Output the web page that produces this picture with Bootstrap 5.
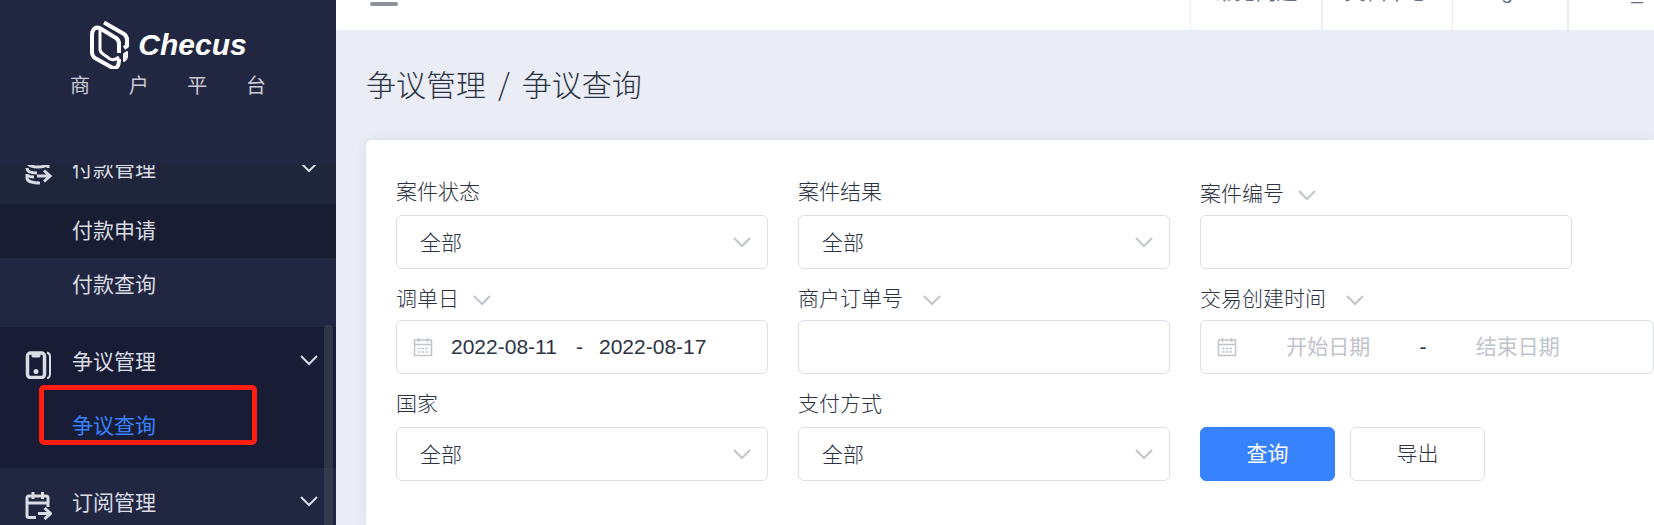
<!DOCTYPE html>
<html lang="zh-CN">
<head>
<meta charset="utf-8">
<meta name="viewport" content="width=device-width, initial-scale=1">
<title>争议查询 - Checus 商户平台</title>
<link rel="stylesheet" href="https://cdn.jsdelivr.net/npm/bootstrap@5.3.0/dist/css/bootstrap.min.css">
<style>
  :root {
    --navy: #222741;
    --navy-deep: #181d35;
    --ink: #2b3343;
    --line: #dcdfe9;
    --muted: #c0c4cc;
    --page: #eaedf5;
    --accent: #3782ff;
  }
  body {
    font-family: "Liberation Sans", "Noto Sans CJK SC", sans-serif;
    font-size: 21px;
    font-weight: 300;
    line-height: 30px;
    color: var(--ink);
    background: var(--page);
  }
  svg { fill: none; stroke: currentColor; display: block; flex: none; }

  /* Sidebar */
  .side { width: 336px; background: var(--navy); color: #d9dce4; font-weight: 400; }
  .brand-box { height: 165px; padding: 21px 70px 0; background: var(--navy); }
  .brand-mark { color: #fff; }
  .brand-name { font-size: 30px; line-height: 48px; font-weight: 700; font-style: italic; color: #fff; }
  .brand-sub { font-size: 20px; line-height: 34px; color: #c9cad3; }
  .menu-scroll { min-height: 0; }
  .menu-scroll > ul { margin-top: -31px; }
  .menu-head { height: 70px; padding: 0 18px 0 24px; gap: 20px; }
  .menu-head svg { margin-bottom: 3px; }
  .menu-head svg.mark-icon { margin: 6px 0 0; }
  .menu-head.hovered { background: #1f253a; }
  .menu-group { padding-bottom: 15px; }
  .menu-group.open { background: var(--navy-deep); }
  .menu-group.open > ul { padding-top: 2px; }
  .menu-item { height: 54px; padding-left: 72px; }
  .menu-item.hovered { background: #181d31; }
  .menu-item.current { color: var(--accent); }
  .marker { position: absolute; left: 39px; top: -14px; width: 218px; height: 60px; border: 5px solid #ff1e10; border-radius: 5px; pointer-events: none; }
  .thumb { position: absolute; right: 3px; top: 160px; bottom: 0; width: 9px; border-radius: 5px 5px 0 0; background: rgba(70, 80, 96, .5); }

  /* Top bar */
  .topbar { height: 76px; margin-top: -46px; background: #fff; color: #66708a; }
  .burger { margin-left: 34px; width: 28px; height: 4px; border-radius: 2px; background: #8e9199; align-self: flex-end; margin-bottom: 24px; box-shadow: 0 -9px #8e9199, 0 -18px #8e9199; }
  .top-link { color: inherit; border-left: 1px solid var(--page); font-weight: 400; padding: 0 23px; }
  .top-link.wide-rule { border-left-width: 2px; padding-left: 22px; }
  .top-link.user { padding: 0 11px 0 28px; }

  /* Page */
  .crumbs { font-family: "Noto Sans CJK SC", sans-serif; font-size: 30px; line-height: 40px; padding: 33px 30px 37px; gap: 12px; }
  .panel { margin-left: 30px; border-radius: 6px 0 0 0; background: #fff; padding: 37px 0 45px 30px; box-shadow: 0 0 12px rgba(60, 80, 140, .1); }
  .filters { display: grid; grid-template-columns: minmax(0, 372fr) minmax(0, 372fr) minmax(0, 454fr); gap: 15px 30px; align-items: end; }
  .cap { display: flex; align-items: center; gap: 14px; margin-bottom: 8px; line-height: 30px; }
  .cap.tight { margin-bottom: 6px; }
  .cap.wide { gap: 20px; }
  .cap svg { margin-top: 3px; color: var(--muted); }
  .box { height: 54px; border: 1px solid var(--line); border-radius: 6px; color: var(--ink); background: #fff; }
  select.box, input.box { display: block; width: 100%; padding: 1px 23px 0; appearance: none; font-weight: 300; }
  .arrow { position: absolute; right: 17px; top: 22px; color: var(--muted); pointer-events: none; }
  .limit { max-width: 372px; }
  .range { display: flex; align-items: center; padding-left: 16px; }
  .range.wide { padding-right: 44px; }
  .range input { border: 0; background: none; padding: 0; color: var(--ink); min-width: 0; outline: 0; }
  .range input::placeholder { color: var(--muted); opacity: 1; }
  .range svg { color: var(--muted); }
  .range .day { width: 109px; }
  .range .first { margin-left: 18px; }
  .range .open-day { flex: 1; text-align: center; }
  .act { width: 135px; height: 54px; border-radius: 6px; font-size: 21px; padding: 0; }
  .acts { gap: 15px; }
  .act.go { background: var(--accent); color: #fff; border-color: var(--accent); font-weight: 400; }
  .act.out { background: #fff; color: var(--ink); border-color: var(--line); font-weight: 300; }
</style>
</head>
<body>
<svg width="0" height="0" class="position-absolute" aria-hidden="true">
  <symbol id="chev" viewBox="0 0 18 11"><path d="M1 1l8 8 8-8"/></symbol>
  <symbol id="cal" viewBox="0 0 20 20"><path d="M1.500 3h17v15.500h-17zM1.500 7.500h17" stroke-width="1.500"/><path d="M5.500 1v4M14.500 1v4" stroke-width="1.500"/><path d="M5 11.500h10M5 15h10" stroke-width="1.500" stroke-dasharray="2.500 1.200"/></symbol>
</svg>
<div class="d-flex min-vh-100">
  <aside class="side vh-100 flex-shrink-0 d-flex flex-column overflow-hidden">
    <div class="brand-box flex-shrink-0">
      <div class="d-flex align-items-center justify-content-center gap-2">
        <svg class="brand-mark" width="41" height="48" viewBox="0 0 41 48" stroke-width="4" stroke-linejoin="round">
          <path d="M30 32V23q0-4-3-6L13 8.500Q8 5 5 8q-2 2-2 6v17q0 4 3 6l16 9q4 2 6 0 2-2 2-8"/>
          <path d="M11 9v19q0 3 3 5l7 5q4 2 9-2" stroke-width="3"/>
          <path d="M15 1.500l20 11.500q3 2 3 6v6l-3 2"/>
          <path d="M38 31v4q0 3-3 5V33z" stroke-width="2" fill="#fff"/>
        </svg>
        <span class="brand-name">Checus</span>
      </div>
      <div class="brand-sub d-flex justify-content-between"><span>商</span><span>户</span><span>平</span><span>台</span></div>
    </div>
    <nav class="menu-scroll flex-grow-1 overflow-hidden position-relative">
      <ul class="list-unstyled mb-0">
        <li class="menu-group">
          <a href="#" class="menu-head hovered d-flex align-items-center text-reset text-decoration-none">
            <svg class="mark-icon" width="28" height="28" viewBox="0 0 28 28" stroke-width="3"><ellipse cx="14" cy="5" rx="10" ry="4"/><path d="M3 10c0 4 4 5 10 5M3 16v4c0 3 5 5 13 5M3 17c2 2 4 2 7 2M24 5v5"/><path d="M13 18h12M20 12.500l6 5.500-6 5.500"/></svg>
            <span class="flex-grow-1">付款管理</span>
            <svg width="18" height="11" stroke-width="2"><use href="#chev"/></svg>
          </a>
          <ul class="list-unstyled">
            <li><a href="#" class="menu-item hovered d-flex align-items-center text-reset text-decoration-none">付款申请</a></li>
            <li><a href="#" class="menu-item d-flex align-items-center text-reset text-decoration-none">付款查询</a></li>
          </ul>
        </li>
        <li class="menu-group open">
          <a href="#" class="menu-head d-flex align-items-center text-reset text-decoration-none">
            <svg class="mark-icon" width="28" height="28" viewBox="0 0 28 28"><rect x="3.500" y="2" width="17" height="24.500" rx="3" stroke-width="3.500"/><path d="M8 2h8v3q0 1-1 1H9q-1 0-1-1z" fill="currentColor"/><circle cx="12" cy="20.500" r="2.500" fill="currentColor" stroke="none"/><path d="M23 1.500q3 1 3 4v18q0 3-3 4" stroke-width="2"/></svg>
            <span class="flex-grow-1">争议管理</span>
            <svg width="18" height="11" stroke-width="2"><use href="#chev"/></svg>
          </a>
          <ul class="list-unstyled">
            <li class="position-relative"><a href="#" class="menu-item current d-flex align-items-center text-decoration-none">争议查询</a><span class="marker"></span></li>
          </ul>
        </li>
        <li class="menu-group">
          <a href="#" class="menu-head d-flex align-items-center text-reset text-decoration-none">
            <svg class="mark-icon" width="28" height="28" viewBox="0 0 28 28" stroke-width="3"><path d="M12 25.500H5q-2 0-2-2V6q0-2 2-2h17q2 0 2 2v9M3 11h21M9 0v7M18.500 0v7"/><path d="M14 21.500h12M20.500 16l6 5.500-6 5.500"/></svg>
            <span class="flex-grow-1">订阅管理</span>
            <svg width="18" height="11" stroke-width="2"><use href="#chev"/></svg>
          </a>
        </li>
      </ul>
      <div class="thumb"></div>
    </nav>
  </aside>

  <main class="flex-grow-1 overflow-hidden">
    <header class="topbar d-flex align-items-stretch">
      <button type="button" class="burger border-0 p-0" aria-label="菜单"></button>
      <nav class="ms-auto d-flex align-items-stretch text-nowrap">
        <a href="#" class="top-link d-flex align-items-center text-decoration-none">常见问题</a>
        <a href="#" class="top-link wide-rule d-flex align-items-center text-decoration-none">文档中心</a>
        <a href="#" class="top-link d-flex align-items-center text-decoration-none">English</a>
        <a href="#" class="top-link wide-rule user d-flex align-items-center text-decoration-none">test_</a>
      </nav>
    </header>

    <nav aria-label="breadcrumb">
      <ol class="crumbs list-unstyled d-flex mb-0"><li>争议管理</li><li>/</li><li>争议查询</li></ol>
    </nav>

    <section class="panel">
      <form class="filters">
        <div>
          <label class="cap" for="status">案件状态</label>
          <div class="position-relative"><select id="status" class="box"><option>全部</option></select><svg class="arrow" width="18" height="11" stroke-width="2"><use href="#chev"/></svg></div>
        </div>
        <div>
          <label class="cap" for="result">案件结果</label>
          <div class="position-relative"><select id="result" class="box"><option>全部</option></select><svg class="arrow" width="18" height="11" stroke-width="2"><use href="#chev"/></svg></div>
        </div>
        <div>
          <label class="cap tight" for="caseno">案件编号<svg width="18" height="11" stroke-width="2"><use href="#chev"/></svg></label>
          <input id="caseno" type="text" class="box limit">
        </div>

        <div>
          <label class="cap tight" for="from">调单日<svg width="18" height="11" stroke-width="2"><use href="#chev"/></svg></label>
          <div class="box range">
            <svg width="20" height="20"><use href="#cal"/></svg>
            <input id="from" type="text" class="day first" value="2022-08-11">
            <span class="px-3">-</span>
            <input type="text" class="day" value="2022-08-17" aria-label="结束日期">
          </div>
        </div>
        <div>
          <label class="cap tight wide" for="order">商户订单号<svg width="18" height="11" stroke-width="2"><use href="#chev"/></svg></label>
          <input id="order" type="text" class="box">
        </div>
        <div>
          <label class="cap tight wide" for="created">交易创建时间<svg width="18" height="11" stroke-width="2"><use href="#chev"/></svg></label>
          <div class="box range wide">
            <svg width="20" height="20"><use href="#cal"/></svg>
            <input id="created" type="text" class="open-day" placeholder="开始日期">
            <span>-</span>
            <input type="text" class="open-day" placeholder="结束日期" aria-label="结束日期">
          </div>
        </div>

        <div>
          <label class="cap" for="country">国家</label>
          <div class="position-relative"><select id="country" class="box"><option>全部</option></select><svg class="arrow" width="18" height="11" stroke-width="2"><use href="#chev"/></svg></div>
        </div>
        <div>
          <label class="cap" for="pay">支付方式</label>
          <div class="position-relative"><select id="pay" class="box"><option>全部</option></select><svg class="arrow" width="18" height="11" stroke-width="2"><use href="#chev"/></svg></div>
        </div>
        <div class="acts d-flex">
          <button type="button" class="btn act go">查询</button>
          <button type="button" class="btn act out">导出</button>
        </div>
      </form>
    </section>
  </main>
</div>
<script src="https://cdn.jsdelivr.net/npm/bootstrap@5.3.0/dist/js/bootstrap.bundle.min.js"></script>
</body>
</html>
